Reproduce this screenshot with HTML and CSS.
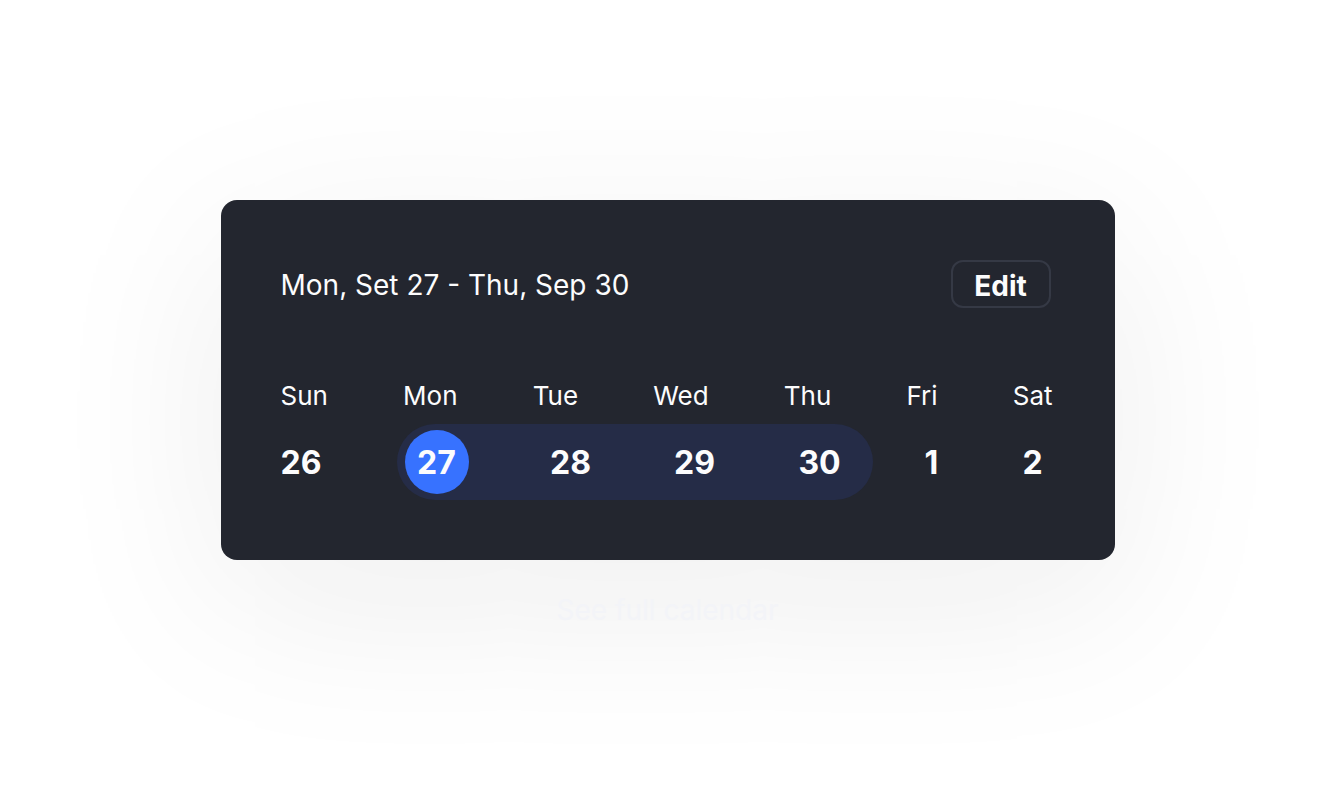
FILE: index.html
```html
<!DOCTYPE html>
<html lang="en">
<head>
    <meta charset="UTF-8">
    <title>Date range</title>
    <link rel="stylesheet" href="styles.css">
</head>
<body>
    <div class="stage">
        <div class="card">
            <div class="card-head">
                <span class="range-label">Mon, Set 27 - Thu, Sep 30</span>
                <button class="edit-btn">Edit</button>
            </div>

            <div class="week-days">
                <span>Sun</span>
                <span>Mon</span>
                <span>Tue</span>
                <span>Wed</span>
                <span>Thu</span>
                <span>Fri</span>
                <span>Sat</span>
            </div>

            <div class="week-dates">
                <span class="date date-first">26</span>
                <div class="range">
                    <span class="date date-active">27</span>
                    <span class="date d28">28</span>
                    <span class="date d29">29</span>
                    <span class="date d30">30</span>
                </div>
                <span class="date d1">1</span>
                <span class="date d2">2</span>
            </div>
        </div>

        <a class="full-link" href="#">See full calendar</a>
    </div>
</body>
</html>
```

FILE: styles.css
```css
/* date range card */
html, body { height: 100%; }
body { margin: 0; background: #fff; font-family: Inter, "Noto Sans", sans-serif; color: #fcfcfd; }
.stage { display: flex; flex-direction: column; align-items: center; min-height: 100%; padding-top: 200px; box-sizing: border-box; }

.card { width: 894px; height: 360px; flex-shrink: 0; box-sizing: border-box; padding: 60px; background: #23262f; border-radius: 16px; box-shadow: 0 40px 180px rgba(20, 20, 30, 0.08); }

.card-head { display: flex; justify-content: space-between; align-items: center; height: 48px; padding-right: 4px; }
.range-label { font-size: 28px; line-height: 34px; padding-top: 2px; }
.edit-btn { height: 48px; width: 100px; border: 2px solid #353945; border-radius: 12px; background: none; color: #fcfcfd; font-family: inherit; font-size: 28px; font-weight: 700; padding: 3px 0 0; }

.week-days { display: flex; justify-content: space-between; margin-top: 71px; padding-right: 2px; font-size: 26px; line-height: 34px; }

.week-dates { display: flex; align-items: center; margin-top: 11px; height: 76px; font-size: 32px; font-weight: 700; line-height: 40px; }
.date { display: flex; flex-shrink: 0; align-items: center; justify-content: center; width: 64px; height: 64px; padding-top: 2px; box-sizing: border-box; }
.date-first { justify-content: flex-start; width: 41px; }

.range { display: flex; flex-shrink: 0; align-items: center; width: 476px; height: 76px; margin-left: 75px; padding-left: 8px; box-sizing: border-box; background: #252c47; border-radius: 38px; }
.date-active { background: #3772ff; border-radius: 50%; }
.d28 { margin-left: 70px; }
.d29 { margin-left: 60px; }
.d30 { margin-left: 61px; }
.d1 { margin-left: 27px; }
.d2 { margin-left: 37px; }

.full-link { margin-top: 34px; font-size: 28px; line-height: 32px; color: #f3f4f8; text-decoration: none; }
```
